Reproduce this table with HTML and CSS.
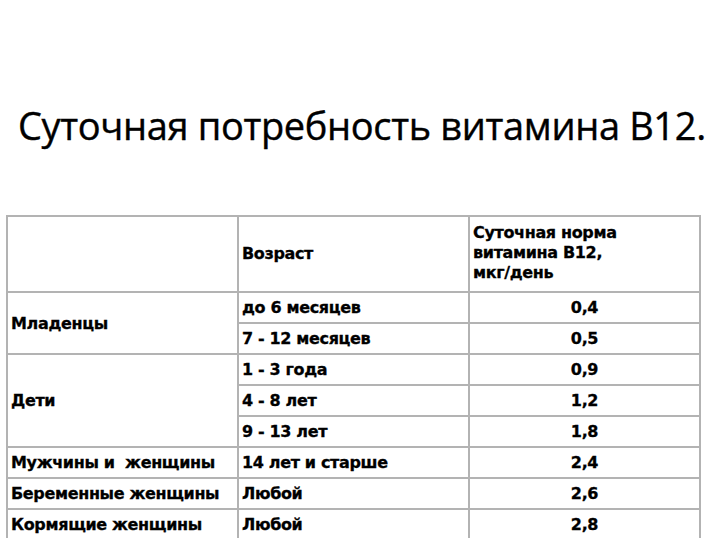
FILE: index.html
```html
<!DOCTYPE html>
<html lang="ru">
<head>
<meta charset="utf-8">
<link rel="stylesheet" href="styles.css">
</head>
<body>
<div class="slide">
  <h1 class="title">Суточная потребность витамина B12.</h1>
  <table class="norms">
    <colgroup><col class="c1"><col class="c2"><col class="c3"></colgroup>
    <tr class="head">
      <td></td>
      <td>Возраст</td>
      <td class="top">Суточная норма витамина B12, <span class="nw">мкг/день</span></td>
    </tr>
    <tr><td rowspan="2">Младенцы</td><td>до 6 месяцев</td><td class="num">0,4</td></tr>
    <tr><td>7 - 12 месяцев</td><td class="num">0,5</td></tr>
    <tr><td rowspan="3">Дети</td><td>1 - 3 года</td><td class="num">0,9</td></tr>
    <tr><td>4 - 8 лет</td><td class="num">1,2</td></tr>
    <tr><td>9 - 13 лет</td><td class="num">1,8</td></tr>
    <tr><td>Мужчины и&nbsp; женщины</td><td>14 лет и старше</td><td class="num">2,4</td></tr>
    <tr><td>Беременные женщины</td><td>Любой</td><td class="num">2,6</td></tr>
    <tr><td>Кормящие женщины</td><td>Любой</td><td class="num">2,8</td></tr>
  </table>
</div>
</body>
</html>
```
FILE: styles.css
```css
html, body {
  margin: 0;
  padding: 0;
  background: #fff;
  overflow: hidden;
}
.slide {
  width: 705px;
  height: 538px;
  padding-top: 101px;
  box-sizing: border-box;
}
.title {
  margin: 0 0 0 18px;
  font-family: "Open Sans", "Liberation Sans", sans-serif;
  font-weight: 400;
  font-size: 38px;
  line-height: 48px;
  color: #000;
  letter-spacing: -0.35px;
  -webkit-text-stroke: 0.4px #000;
  white-space: nowrap;
}
.norms {
  margin: 66px 0 0 6px;
  width: 693px;
  border-collapse: collapse;
  table-layout: fixed;
  font-family: "DejaVu Sans", "Liberation Sans", sans-serif;
  font-weight: 700;
  font-size: 16px;
  letter-spacing: -0.35px;
  color: #000;
  -webkit-text-stroke: 0.3px #000;
}
.c1, .c2, .c3 { width: 231px; }
.norms td {
  border: 2px solid #b3b3b3;
  height: 29px;
  padding: 0 3px;
  vertical-align: middle;
  white-space: nowrap;
}
.norms .head td {
  height: 68px;
  line-height: 20px;
}
.norms .head td.top {
  vertical-align: top;
  padding-top: 6px;
  white-space: normal;
  padding-right: 40px;
}
.nw { white-space: nowrap; }
.norms td.num {
  text-align: center;
}
```
